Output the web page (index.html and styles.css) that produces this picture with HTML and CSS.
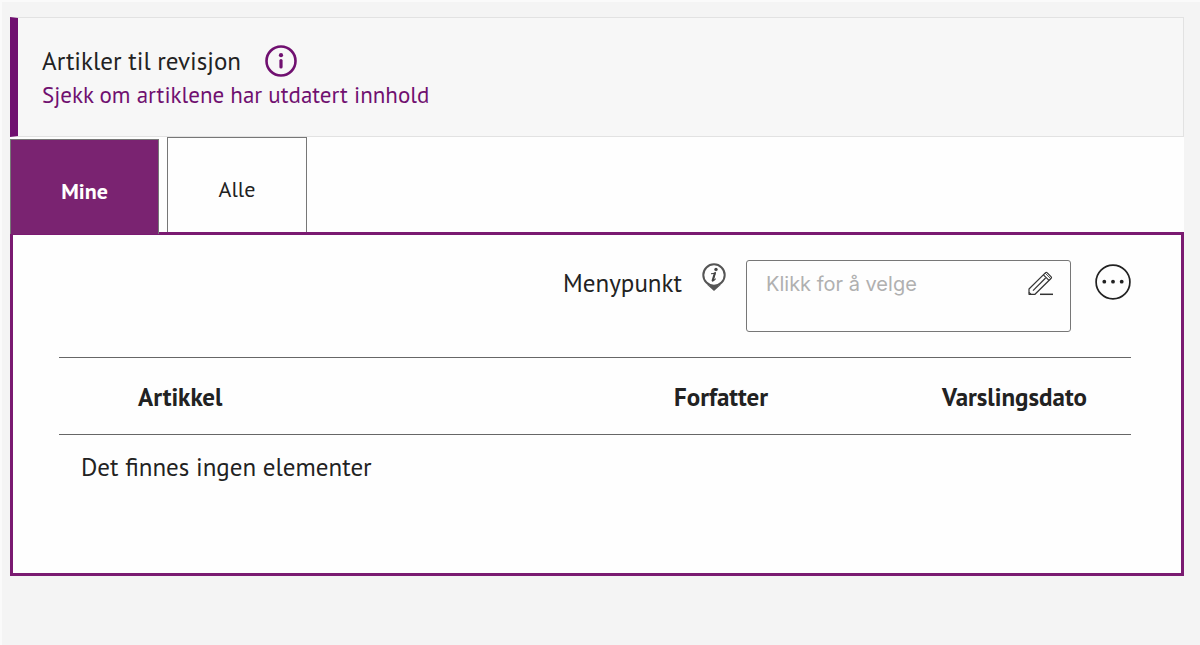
FILE: index.html
```html
<!DOCTYPE html>
<html lang="no">

<head>
    <meta charset="UTF-8">
    <meta name="viewport" content="width=device-width, initial-scale=1.0">
    <title>Artikler til revisjon</title>
    <link rel="stylesheet" href="styles.css">
</head>

<body>
    <main class="widget">
        <!-- Header Section -->
        <header class="widget-header">
            <div class="title-row">
                <h1>Artikler til revisjon</h1>
                <button type="button" class="icon-button" aria-label="Informasjon">
                    <svg width="32" height="32" viewBox="0 0 32 32">
                        <circle cx="16" cy="16" r="14.5" fill="none" stroke="#701070" stroke-width="2.6" />
                        <circle cx="16" cy="10.2" r="2.1" fill="#701070" />
                        <path d="M16 15.6V22" stroke="#701070" stroke-width="3.2" stroke-linecap="round" />
                    </svg>
                </button>
            </div>
            <p class="subtitle">Sjekk om artiklene har utdatert innhold</p>
        </header>

        <!-- Tabs -->
        <div class="tabs" role="tablist">
            <button type="button" class="tab active" role="tab" aria-selected="true">Mine</button>
            <button type="button" class="tab" role="tab" aria-selected="false">Alle</button>
        </div>

        <section class="panel">
            <div class="toolbar">
                <label for="menypunkt">Menypunkt</label>
                <button type="button" class="icon-button pin" aria-label="Hjelp">
                    <svg width="24" height="28" viewBox="0 0 24 28">
                        <path d="M12 28L4.8 21.4Q12 24.6 19.2 21.4Z" fill="#555" />
                        <circle cx="12" cy="12" r="10.7" fill="#fff" stroke="#555" stroke-width="2" />
                        <circle cx="14" cy="6.4" r="1.7" fill="#444" />
                        <path d="M9 10.8Q11.6 10.6 13.3 9.7L10.8 17.8Q12 17.6 13.6 15.6" fill="none" stroke="#444" stroke-width="1.1" />
                        <path d="M12.8 10.4L10.6 17.6" stroke="#444" stroke-width="2" stroke-linecap="round" />
                    </svg>
                </button>
                <div class="picker">
                    <textarea id="menypunkt" placeholder="Klikk for å velge"></textarea>
                    <button type="button" class="icon-button edit" aria-label="Rediger">
                        <svg width="26" height="26" viewBox="0 0 26 26" fill="none" stroke="#333" stroke-width="1.2" stroke-linejoin="round">
                            <path d="M1 23.3V18L17.6 1.6Q18.3 1 19 1.6L23.2 5.8Q23.8 6.5 23.2 7.2L7 23.3Z" />
                            <path d="M15.4 3.8L21 9.4" />
                            <path d="M17.2 2.2L22.6 7.6" stroke-width="0.8" />
                            <path d="M5 19.6L17.6 7" />
                            <path d="M1 21.3L3 23.3" />
                            <path d="M12 23.3H25" stroke-width="1.5" />
                        </svg>
                    </button>
                </div>
                <button type="button" class="icon-button more" aria-label="Flere valg">
                    <svg width="36" height="36" viewBox="0 0 36 36" fill="#222">
                        <circle cx="18" cy="18" r="16.9" fill="none" stroke="#222" stroke-width="1.7" />
                        <circle cx="9.3" cy="17.7" r="1.9" />
                        <circle cx="18" cy="17.7" r="1.9" />
                        <circle cx="26.7" cy="17.7" r="1.9" />
                    </svg>
                </button>
            </div>

            <table class="articles">
                <thead>
                    <tr>
                        <th class="col-article">Artikkel</th>
                        <th>Forfatter</th>
                        <th>Varslingsdato</th>
                    </tr>
                </thead>
                <tbody>
                    <tr>
                        <td colspan="3">Det finnes ingen elementer</td>
                    </tr>
                </tbody>
            </table>
        </section>
    </main>
</body>

</html>
```
FILE: styles.css
```css
* {
    box-sizing: border-box;
}

html {
    background-color: #f4f4f4;
}

body {
    margin: 0;
    min-height: 100vh;
    padding: 15px 16px 16px 8px;
    font-family: "PT Sans", Lato, sans-serif;
    font-size: 25px;
    line-height: 32px;
    color: #222;
    background-color: #f4f4f4;
    border-top: 2px solid #fafafa;
    border-left: 2px solid #fafafa;
}

button {
    font-family: inherit;
    cursor: pointer;
}

.widget {
    background-color: #fefefe;
}

/* Header Styling */
.widget-header {
    padding: 27px 24px 25px;
    background-color: #f7f7f7;
    border: 1px solid #e2e2e2;
    border-left: 8px solid #701070;
}

.title-row {
    display: flex;
    align-items: center;
    gap: 24px;
}

h1 {
    margin: 0;
    font-size: 25px;
    font-weight: normal;
}

.subtitle {
    margin: 0;
    padding-top: 2px;
    font-size: 23px;
    color: #701070;
}

.icon-button {
    display: block;
    padding: 0;
    background: none;
    border: none;
}

.icon-button svg {
    display: block;
}

/* Tabs */
.tabs {
    display: flex;
    gap: 8px;
}

.tab {
    width: 140px;
    height: 95px;
    padding: 8px 0 0;
    font-size: 22px;
    color: #222;
    background-color: #fefefe;
    border: 1px solid #777;
    border-bottom: none;
}

.tab.active {
    width: 149px;
    margin: 2px 0 -2px;
    font-weight: bold;
    color: #fff;
    background-color: #7a2371;
    position: relative;
}

.panel {
    min-height: 344px;
    padding: 25px 50px 25px 46px;
    border: 3px solid #7a1a71;
}

.toolbar {
    display: flex;
    justify-content: flex-end;
    align-items: flex-start;
    padding-bottom: 25px;
}

.toolbar label {
    padding-top: 7px;
}

.pin {
    margin: 3px 20px 0;
}

.picker {
    position: relative;
    width: 325px;
}

.picker textarea {
    display: block;
    width: 100%;
    height: 72px;
    padding: 8px 60px 8px 19px;
    font-family: Inter, sans-serif;
    font-size: 20px;
    line-height: 30px;
    color: #222;
    background-color: #fefefe;
    border: 1px solid #777;
    border-radius: 3px;
    resize: none;
    overflow: hidden;
}

.picker textarea::placeholder {
    color: #b0b0b0;
    opacity: 1;
}

.edit {
    position: absolute;
    top: 11px;
    right: 17px;
}

.more {
    margin: 4px 0 0 24px;
}

.articles {
    width: 100%;
    table-layout: fixed;
    border-collapse: collapse;
}

.articles th {
    height: 77px;
    padding: 2px 0 0 79px;
    text-align: left;
    border-top: 1px solid #666;
    border-bottom: 1px solid #666;
}

.articles .col-article {
    width: 50%;
}

.articles td {
    padding: 16px 22px;
}
```
